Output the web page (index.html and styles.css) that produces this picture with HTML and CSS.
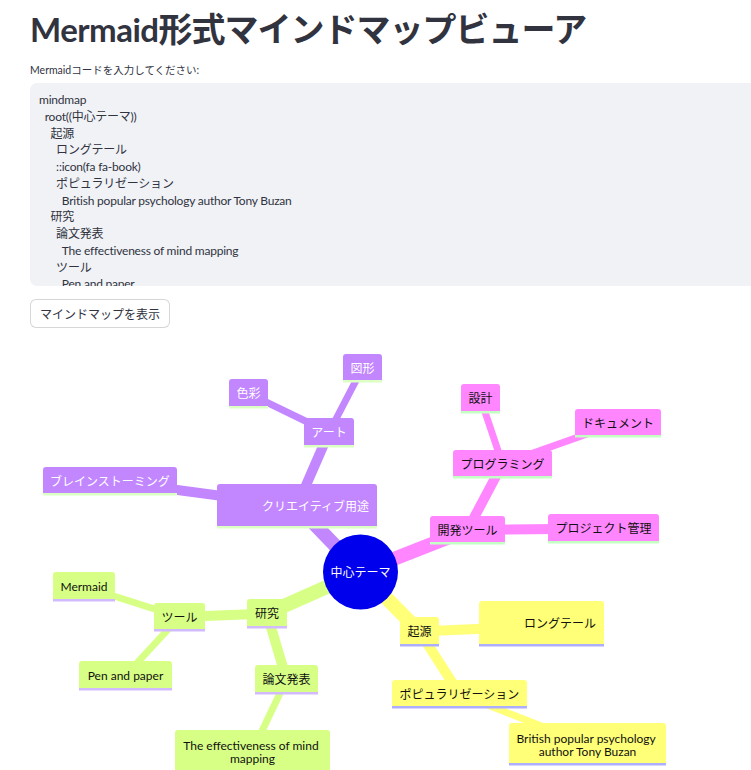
FILE: index.html
```html
<!DOCTYPE html>
<html lang="ja">
<head>
  <meta charset="UTF-8" />
  <meta name="viewport" content="width=device-width, initial-scale=1.0"/>
  <title>Mermaid形式マインドマップビューア</title>
  <link rel="stylesheet" href="styles.css">
</head>
<body>
  <main class="page">
    <h1 class="title"><span class="title-latin">Mermaid</span>形式マインドマップビューア</h1>

    <label class="field-label" for="code">Mermaidコードを入力してください:</label>
    <div class="code-box" id="code">
<pre>mindmap
  root((中心テーマ))
    起源
      ロングテール
      ::icon(fa fa-book)
      ポピュラリゼーション
        British popular psychology author Tony Buzan
    研究
      論文発表
        The effectiveness of mind mapping
      ツール
        Pen and paper</pre>
    </div>

    <button class="show-btn" type="button">マインドマップを表示</button>

    <div class="mindmap">
      <svg width="751" height="430" viewBox="0 340 751 430">
        <!-- edges: level 1 -->
        <g class="edge w1">
          <line class="e-yellow" x1="360.5" y1="572" x2="419.5" y2="631.5"/>
          <line class="e-green" x1="360.5" y1="572" x2="267" y2="613.5"/>
          <line class="e-purple" x1="360.5" y1="572" x2="297" y2="506"/>
          <line class="e-pink" x1="360.5" y1="572" x2="467.5" y2="530"/>
        </g>
        <!-- edges: level 2 -->
        <g class="edge w2">
          <line class="e-yellow" x1="419.5" y1="631.5" x2="541.5" y2="626"/>
          <line class="e-yellow" x1="419.5" y1="631.5" x2="459.5" y2="694"/>
          <line class="e-green" x1="267" y1="613.5" x2="179.5" y2="617"/>
          <line class="e-green" x1="267" y1="613.5" x2="286.5" y2="679.5"/>
          <line class="e-purple" x1="297" y1="506" x2="110" y2="481"/>
          <line class="e-purple" x1="297" y1="506" x2="329" y2="432.5"/>
          <line class="e-pink" x1="467.5" y1="530" x2="603.5" y2="528.5"/>
          <line class="e-pink" x1="467.5" y1="530" x2="502.5" y2="464"/>
        </g>
        <!-- edges: level 3 -->
        <g class="edge w3">
          <line class="e-yellow" x1="459.5" y1="694" x2="587.5" y2="744"/>
          <line class="e-green" x1="179.5" y1="617" x2="84" y2="586.5"/>
          <line class="e-green" x1="179.5" y1="617" x2="125.5" y2="675.5"/>
          <line class="e-green" x1="286.5" y1="679.5" x2="252.5" y2="751"/>
          <line class="e-purple" x1="329" y1="432.5" x2="248.5" y2="393.5"/>
          <line class="e-purple" x1="329" y1="432.5" x2="362.5" y2="368"/>
          <line class="e-pink" x1="502.5" y1="464" x2="480.5" y2="398.5"/>
          <line class="e-pink" x1="502.5" y1="464" x2="618" y2="423"/>
        </g>

        <!-- purple section -->
        <g class="node n-purple">
          <path d="M217 526V487Q217 484 220 484H374Q377 484 377 487V526Z"/>
          <rect class="under" x="217" y="526" width="160" height="2.5"/>
          <text x="369" y="506" text-anchor="end">クリエイティブ用途</text>
        </g>
        <g class="node n-purple">
          <path d="M43 493V470Q43 467 46 467H174Q177 467 177 470V493Z"/>
          <rect class="under" x="43" y="493" width="134" height="2.5"/>
          <text x="110" y="481">ブレインストーミング</text>
        </g>
        <g class="node n-purple">
          <path d="M304 445V421Q304 418 307 418H351Q354 418 354 421V445Z"/>
          <rect class="under" x="304" y="445" width="50" height="2.5"/>
          <text x="329" y="432">アート</text>
        </g>
        <g class="node n-purple">
          <path d="M229 406V382Q229 379 232 379H265Q268 379 268 382V406Z"/>
          <rect class="under" x="229" y="406" width="39" height="2.5"/>
          <text x="248.5" y="393">色彩</text>
        </g>
        <g class="node n-purple">
          <path d="M343 380V357Q343 354 346 354H379Q382 354 382 357V380Z"/>
          <rect class="under" x="343" y="380" width="39" height="2.5"/>
          <text x="362.5" y="368">図形</text>
        </g>

        <!-- pink section -->
        <g class="node n-pink">
          <path d="M430 542V519Q430 516 433 516H502Q505 516 505 519V542Z"/>
          <rect class="under" x="430" y="542" width="75" height="2.5"/>
          <text x="467.5" y="530">開発ツール</text>
        </g>
        <g class="node n-pink">
          <path d="M548 541V517Q548 514 551 514H656Q659 514 659 517V541Z"/>
          <rect class="under" x="548" y="541" width="111" height="2.5"/>
          <text x="603.5" y="528">プロジェクト管理</text>
        </g>
        <g class="node n-pink">
          <path d="M453 476V453Q453 450 456 450H549Q552 450 552 453V476Z"/>
          <rect class="under" x="453" y="476" width="99" height="2.5"/>
          <text x="502.5" y="464">プログラミング</text>
        </g>
        <g class="node n-pink">
          <path d="M461 411V387Q461 384 464 384H497Q500 384 500 387V411Z"/>
          <rect class="under" x="461" y="411" width="39" height="2.5"/>
          <text x="480.5" y="398">設計</text>
        </g>
        <g class="node n-pink">
          <path d="M575 435V412Q575 409 578 409H658Q661 409 661 412V435Z"/>
          <rect class="under" x="575" y="435" width="86" height="2.5"/>
          <text x="618" y="423">ドキュメント</text>
        </g>

        <!-- yellow section -->
        <g class="node n-yellow">
          <path d="M400 644V620Q400 617 403 617H436Q439 617 439 620V644Z"/>
          <rect class="under" x="400" y="644" width="39" height="2.5"/>
          <text x="419.5" y="631">起源</text>
        </g>
        <g class="node n-yellow">
          <path d="M479 644V604Q479 601 482 601H601Q604 601 604 604V644Z"/>
          <rect class="under" x="479" y="644" width="125" height="2.5"/>
          <text x="596" y="623" text-anchor="end">ロングテール</text>
        </g>
        <g class="node n-yellow">
          <path d="M392 706V683Q392 680 395 680H524Q527 680 527 683V706Z"/>
          <rect class="under" x="392" y="706" width="135" height="2.5"/>
          <text x="459.5" y="694">ポピュラリゼーション</text>
        </g>
        <g class="node n-yellow">
          <path d="M509 763V726Q509 723 512 723H663Q666 723 666 726V763Z"/>
          <rect class="under" x="509" y="763" width="157" height="2.5"/>
          <text class="two-line" y="738">
            <tspan x="587.5">British popular psychology</tspan>
            <tspan x="587.5" dy="13">author Tony Buzan</tspan>
          </text>
        </g>

        <!-- green section -->
        <g class="node n-green">
          <path d="M247 626V602Q247 599 250 599H284Q287 599 287 602V626Z"/>
          <rect class="under" x="247" y="626" width="40" height="2.5"/>
          <text x="267" y="613">研究</text>
        </g>
        <g class="node n-green">
          <path d="M154 629V606Q154 603 157 603H202Q205 603 205 606V629Z"/>
          <rect class="under" x="154" y="629" width="51" height="2.5"/>
          <text x="179.5" y="617">ツール</text>
        </g>
        <g class="node n-green">
          <path d="M53 599V575Q53 572 56 572H112Q115 572 115 575V599Z"/>
          <rect class="under" x="53" y="599" width="62" height="2.5"/>
          <text x="84" y="586">Mermaid</text>
        </g>
        <g class="node n-green">
          <path d="M79 688V664Q79 661 82 661H169Q172 661 172 664V688Z"/>
          <rect class="under" x="79" y="688" width="93" height="2.5"/>
          <text x="125.5" y="675">Pen and paper</text>
        </g>
        <g class="node n-green">
          <path d="M255 692V668Q255 665 258 665H315Q318 665 318 668V692Z"/>
          <rect class="under" x="255" y="692" width="63" height="2.5"/>
          <text x="286.5" y="679">論文発表</text>
        </g>
        <g class="node n-green">
          <path d="M175 772V733Q175 730 178 730H327Q330 730 330 733V772Z"/>
          <text class="two-line" y="745">
            <tspan x="252.5">The effectiveness of mind</tspan>
            <tspan x="252.5" dy="13">mapping</tspan>
          </text>
        </g>

        <!-- root -->
        <g class="node n-root">
          <circle cx="360.5" cy="572" r="37.5"/>
          <text x="360.5" y="572">中心テーマ</text>
        </g>
      </svg>
    </div>
  </main>
</body>
</html>
```

FILE: styles.css
```css
body {
  margin: 0;
  background: #ffffff;
  color: #31333f;
  font-family: "Lato", "Noto Sans CJK JP", sans-serif;
  overflow: hidden;
}
.page {
  width: 800px;
  padding: 7px 0 0 30px;
}
.title {
  margin: 0;
  height: 42px;
  font-family: "Noto Sans CJK JP", sans-serif;
  font-size: 34px;
  font-weight: 700;
  line-height: 42px;
  letter-spacing: -1px;
  color: #31333f;
  white-space: nowrap;
}
.title-latin {
  font-family: "Lato", sans-serif;
  font-size: 33px;
  line-height: 1;
  letter-spacing: -0.5px;
}
.field-label {
  display: block;
  margin-top: 14px;
  font-size: 10.5px;
  line-height: 14px;
}
.code-box {
  margin-top: 6px;
  height: 203px;
  box-sizing: border-box;
  padding: 9px 9px;
  background: #f0f2f6;
  border-radius: 7px;
  overflow: hidden;
}
.code-box pre {
  margin: 0;
  font-family: "Lato", "Noto Sans CJK JP", sans-serif;
  font-size: 12px;
  line-height: 16.75px;
  letter-spacing: -0.22px;
  color: #31333f;
  white-space: pre;
}
.show-btn {
  display: block;
  margin-top: 13px;
  height: 29px;
  padding: 0 9px;
  background: #ffffff;
  border: 1px solid rgba(49, 51, 63, 0.2);
  border-radius: 6px;
  font-family: "Noto Sans CJK JP", sans-serif;
  font-size: 12px;
  color: #31333f;
}
.mindmap {
  margin: 12px 0 0 -30px;
}
.mindmap svg {
  display: block;
}
.edge line {
  stroke-linecap: butt;
}
.w1 line { stroke-width: 14; }
.w2 line { stroke-width: 10; }
.w3 line { stroke-width: 7; }
.e-yellow { stroke: #ffff78; }
.e-green { stroke: #d7ff86; }
.e-purple { stroke: #c286ff; }
.e-pink { stroke: #ff86ff; }

.node text {
  font-family: "Lato", "Noto Sans CJK JP", sans-serif;
  font-size: 12px;
  text-anchor: middle;
  dominant-baseline: central;
  fill: #111111;
}
.node text[text-anchor="end"] {
  text-anchor: end;
}
.n-yellow path { fill: #ffff78; }
.n-yellow .under { fill: #aeaeff; }
.n-green path { fill: #d7ff86; }
.n-green .under { fill: #d2baff; }
.n-purple path { fill: #c286ff; }
.n-purple .under { fill: #dcffc4; }
.n-purple text { fill: #ffffff; }
.n-pink path { fill: #ff86ff; }
.n-pink .under { fill: #c4ffc4; }
.n-root circle { fill: #0000ec; }
.n-root text { fill: #ffffff; }
```
